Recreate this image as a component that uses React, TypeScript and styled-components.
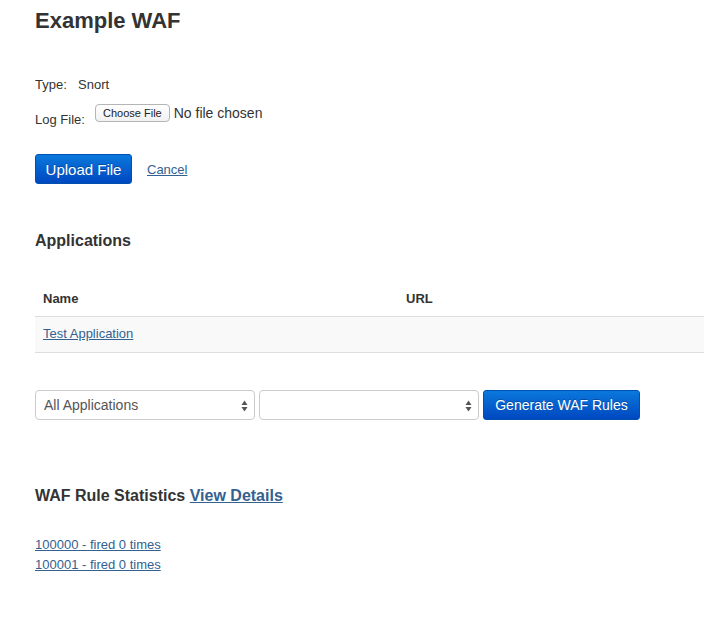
import * as React from 'react'
import styled, { createGlobalStyle } from 'styled-components'

const GlobalStyle = createGlobalStyle`
  html, body {
    margin: 0;
    padding: 0;
    background: #fff;
  }
  body {
    font-family: "Liberation Sans", Arial, sans-serif;
    font-size: 13px;
    color: #333;
  }
`

const Page = styled.div`
  padding: 8px 0 40px 35px;
`

const Title = styled.h1`
  margin: 0;
  font-size: 22px;
  line-height: 26px;
  font-weight: bold;
  color: #333;
`

const Form = styled.div`
  margin-top: 43px;
  display: flex;
  flex-direction: column;
`

const FieldRow = styled.div<{ top?: number }>`
  display: flex;
  align-items: flex-end;
  margin-top: ${(p) => p.top ?? 0}px;
  font-size: 13px;
  line-height: 16px;
`

const Label = styled.span<{ width: number }>`
  width: ${(p) => p.width}px;
  color: #333;
`

const FilePicker = styled.span`
  display: flex;
  align-items: center;
  gap: 4px;
  margin-bottom: 6px;
  font-size: 14px;
`

const ChooseButton = styled.span`
  display: inline-block;
  box-sizing: border-box;
  height: 18px;
  padding: 0 7px;
  border: 1px solid #b5b5b5;
  border-radius: 4px;
  background: linear-gradient(#fff, #f1f1f1);
  font-size: 11px;
  line-height: 16px;
  color: #222;
`

const Actions = styled.div`
  margin-top: 26px;
  display: flex;
  align-items: center;
  gap: 15px;
`

const PrimaryButton = styled.button<{ width: number; size: number }>`
  box-sizing: border-box;
  width: ${(p) => p.width}px;
  height: 30px;
  padding: 0;
  border: 1px solid #0050b0;
  border-radius: 3px;
  background: linear-gradient(#0a78dc, #0048c0);
  color: #fff;
  font-family: "Liberation Sans", Arial, sans-serif;
  font-size: ${(p) => p.size}px;
  text-shadow: 0 -1px 0 rgba(0, 0, 0, 0.25);
  cursor: pointer;
`

const Link = styled.a<{ bold?: boolean }>`
  color: #34618f;
  text-decoration: underline;
  font-weight: ${(p) => (p.bold ? 'bold' : 'normal')};
  cursor: pointer;
`

const SectionTitle = styled.h3<{ top: number }>`
  margin: ${(p) => p.top}px 0 0 0;
  font-size: 16px;
  line-height: 20px;
  font-weight: bold;
  color: #333;
`

const Table = styled.table`
  margin-top: 31px;
  width: 100%;
  border-collapse: collapse;
  font-size: 13px;
`

const HeadCell = styled.th<{ width?: number }>`
  text-align: left;
  font-weight: bold;
  padding: 8px 8px 8px 8px;
  line-height: 18px;
  width: ${(p) => (p.width ? `${p.width}px` : 'auto')};
  color: #333;
`

const Cell = styled.td`
  padding: 8px 8px 9px 8px;
  line-height: 18px;
  background: #f9f9f9;
  border-top: 1px solid #ddd;
  border-bottom: 1px solid #ddd;
`

const Controls = styled.div`
  margin-top: 37px;
  display: flex;
  align-items: center;
  gap: 4px;
`

const Select = styled.div`
  position: relative;
  box-sizing: border-box;
  width: 220px;
  height: 30px;
  padding: 0 20px 0 8px;
  border: 1px solid #ccc;
  border-radius: 4px;
  background: #fff;
  display: flex;
  align-items: center;
  font-size: 14px;
  color: #555;
`

const Arrows = styled.svg`
  position: absolute;
  right: 6px;
  top: 9px;
`

const Stats = styled.div`
  margin-top: 29px;
  display: flex;
  flex-direction: column;
  font-size: 13px;
  line-height: 20px;
`

const SelectBox = ({ value }: { value?: string }) => (
  <Select>
    {value}
    <Arrows width="7" height="12" viewBox="0 0 7 12">
      <path d="M3.5 0.5 L6.5 5 L0.5 5 Z" fill="#555" />
      <path d="M3.5 11.5 L6.5 7 L0.5 7 Z" fill="#555" />
    </Arrows>
  </Select>
)

export default function App() {
  return (
    <>
      <GlobalStyle />
      <Page>
        <Title>Example WAF</Title>
        <Form>
          <FieldRow>
            <Label width={43}>Type:</Label>
            <span>Snort</span>
          </FieldRow>
          <FieldRow top={11}>
            <Label width={60}>Log File:</Label>
            <FilePicker>
              <ChooseButton>Choose File</ChooseButton>
              No file chosen
            </FilePicker>
          </FieldRow>
        </Form>
        <Actions>
          <PrimaryButton width={97} size={15}>Upload File</PrimaryButton>
          <Link>Cancel</Link>
        </Actions>

        <SectionTitle top={47}>Applications</SectionTitle>
        <Table>
          <thead>
            <tr>
              <HeadCell width={347}>Name</HeadCell>
              <HeadCell>URL</HeadCell>
            </tr>
          </thead>
          <tbody>
            <tr>
              <Cell>
                <Link>Test Application</Link>
              </Cell>
              <Cell />
            </tr>
          </tbody>
        </Table>

        <Controls>
          <SelectBox value="All Applications" />
          <SelectBox />
          <PrimaryButton width={157} size={14}>Generate WAF Rules</PrimaryButton>
        </Controls>

        <SectionTitle top={66}>
          WAF Rule Statistics <Link bold>View Details</Link>
        </SectionTitle>
        <Stats>
          <Link>100000 - fired 0 times</Link>
          <Link>100001 - fired 0 times</Link>
        </Stats>
      </Page>
    </>
  )
}
